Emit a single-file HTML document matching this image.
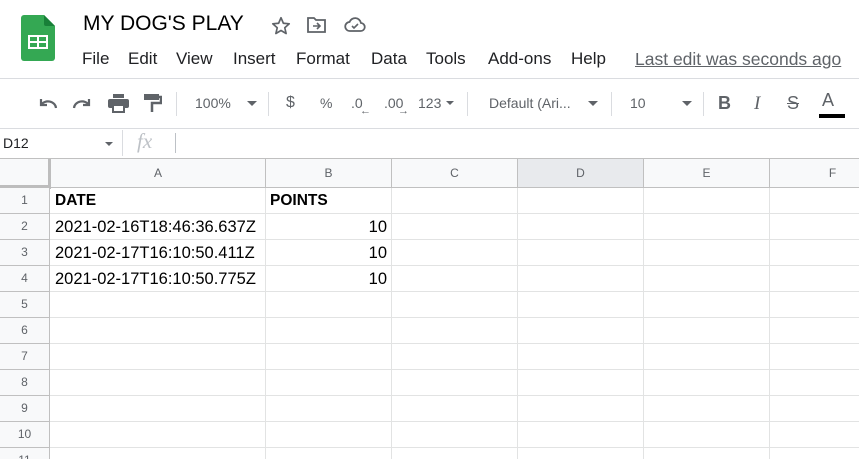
<!DOCTYPE html>
<html><head><meta charset="utf-8"><style>
*{margin:0;padding:0;box-sizing:border-box}
html,body{width:859px;height:459px;overflow:hidden}
body{background:#fff;font-family:"Liberation Sans",Arial,sans-serif;position:relative;color:#202124}
.a{position:absolute;white-space:nowrap}
.tb{color:#5f6368;font-size:14px}
.sep{position:absolute;width:1px;background:#dadce0;top:92px;height:24px}
.hl{position:absolute;left:0;width:859px;height:1px;background:#e2e3e3}
.vl{position:absolute;top:188px;height:271px;width:1px;background:#e2e3e3}
.ch{position:absolute;top:159px;height:29px;background:#f8f9fa;border-right:1px solid #c0c0c0;border-bottom:1px solid #c0c0c0;font-size:12px;color:#5f6368;text-align:center;line-height:29px}
.rh{position:absolute;left:0;width:50px;height:26px;background:#f8f9fa;border-right:1px solid #c0c0c0;border-bottom:1px solid #c0c0c0;font-size:12px;color:#5f6368;text-align:center;line-height:25px}
.c{position:absolute;font-size:16.5px;color:#000;line-height:26px}
.r{position:absolute;font-size:16.5px;color:#000;line-height:26px;right:472px}
</style></head><body>
<svg class="a" style="left:21px;top:15px" width="34" height="46" viewBox="0 0 34 46"><path d="M3 0h20l11 11v32a3 3 0 0 1-3 3H3a3 3 0 0 1-3-3V3a3 3 0 0 1 3-3z" fill="#34a853"/><path d="M23 0l11 11H25a2 2 0 0 1-2-2z" fill="#188038"/><rect x="7" y="20" width="20" height="14" fill="#fff"/><rect x="9" y="22" width="7" height="4" fill="#34a853"/><rect x="18" y="22" width="7" height="4" fill="#34a853"/><rect x="9" y="28" width="7" height="4" fill="#34a853"/><rect x="18" y="28" width="7" height="4" fill="#34a853"/></svg>
<div class="a" style="left:83px;top:12px;font-size:21px;color:#000">MY DOG'S PLAY</div>
<svg class="a" style="left:270px;top:15px" width="22" height="22" viewBox="0 0 24 24"><path d="M12 3l2.6 6 6.4.6-4.9 4.3 1.5 6.3L12 16.9 6.4 20.2l1.5-6.3L3 9.6 9.4 9z" fill="none" stroke="#5f6368" stroke-width="1.8" stroke-linejoin="round"/></svg>
<svg class="a" style="left:307px;top:16px" width="20" height="18" viewBox="0 0 20 18"><path d="M1 2h6l2 2h9v12H1z" fill="none" stroke="#5f6368" stroke-width="1.8"/><path d="M6 10h6M10 7l3 3-3 3" fill="none" stroke="#5f6368" stroke-width="1.6"/></svg>
<svg class="a" style="left:344px;top:17px" width="22" height="16" viewBox="0 0 22 16"><path d="M6 14a4.5 4.5 0 0 1-.5-9A6 6 0 0 1 17 6a4 4 0 0 1-.5 8z" fill="none" stroke="#5f6368" stroke-width="1.8"/><path d="M8 9l2 2 4-4" fill="none" stroke="#5f6368" stroke-width="1.6"/></svg>
<div class="a" style="left:82px;top:49px;font-size:17px;color:#202124">
<span class="a" style="left:0">File</span><span class="a" style="left:46px">Edit</span><span class="a" style="left:94px">View</span><span class="a" style="left:151px">Insert</span><span class="a" style="left:214px">Format</span><span class="a" style="left:289px">Data</span><span class="a" style="left:344px">Tools</span><span class="a" style="left:406px">Add-ons</span><span class="a" style="left:489px">Help</span></div>
<div class="a" style="left:635px;top:49px;font-size:17.5px;color:#5f6368;text-decoration:underline">Last edit was seconds ago</div>
<div class="hl" style="top:78px;background:#dadce0"></div>
<svg class="a" style="left:37px;top:96px" width="22" height="16" viewBox="0 0 22 16"><path d="M4 3v6h6" fill="none" stroke="#5f6368" stroke-width="2.2"/><path d="M4 9a8 7 0 0 1 15 3" fill="none" stroke="#5f6368" stroke-width="2.2"/></svg>
<svg class="a" style="left:71px;top:96px" width="22" height="16" viewBox="0 0 22 16"><path d="M18 3v6h-6" fill="none" stroke="#5f6368" stroke-width="2.2"/><path d="M18 9a8 7 0 0 0-15 3" fill="none" stroke="#5f6368" stroke-width="2.2"/></svg>
<svg class="a" style="left:108px;top:94px" width="21" height="19" viewBox="0 0 21 19"><rect x="5" y="0" width="11" height="4" fill="#5f6368"/><rect x="0" y="5" width="21" height="9" rx="2" fill="#5f6368"/><rect x="5" y="11" width="11" height="7" fill="#fff" stroke="#5f6368" stroke-width="2"/></svg>
<svg class="a" style="left:144px;top:94px" width="18" height="19" viewBox="0 0 18 19"><rect x="0" y="0" width="15" height="6" fill="#5f6368"/><path d="M15 3h2v6H8v9" fill="none" stroke="#5f6368" stroke-width="2.5"/></svg>
<div class="sep" style="left:176px"></div>
<div class="a tb" style="left:195px;top:95px">100%</div>
<div class="a" style="left:247px;top:101px;border:5px solid transparent;border-top-color:#5f6368"></div>
<div class="sep" style="left:268px"></div>
<div class="a tb" style="left:286px;top:94px;font-size:16px">$</div>
<div class="a tb" style="left:320px;top:95px">%</div>
<div class="a tb" style="left:351px;top:95px">.0</div>
<div class="a tb" style="left:360px;top:105px;font-size:11px">←</div>
<div class="a tb" style="left:384px;top:95px">.00</div>
<div class="a tb" style="left:398px;top:105px;font-size:11px">→</div>
<div class="a tb" style="left:418px;top:95px">123</div>
<div class="a" style="left:446px;top:101px;border:4px solid transparent;border-top-color:#5f6368"></div>
<div class="sep" style="left:467px"></div>
<div class="a tb" style="left:489px;top:95px">Default (Ari...</div>
<div class="a" style="left:588px;top:101px;border:5px solid transparent;border-top-color:#5f6368"></div>
<div class="sep" style="left:611px"></div>
<div class="a tb" style="left:630px;top:95px">10</div>
<div class="a" style="left:682px;top:101px;border:5px solid transparent;border-top-color:#5f6368"></div>
<div class="sep" style="left:703px"></div>
<div class="a" style="left:718px;top:93px;font-size:18px;font-weight:bold;color:#5f6368">B</div>
<div class="a" style="left:754px;top:93px;font-size:19px;font-style:italic;font-family:'Liberation Serif',serif;color:#5f6368">I</div>
<div class="a" style="left:787px;top:93px;font-size:18px;color:#5f6368;text-decoration:line-through">S</div>
<div class="a" style="left:822px;top:90px;font-size:18px;color:#5f6368">A</div>
<div class="a" style="left:819px;top:114px;width:26px;height:4px;background:#000"></div>
<div class="hl" style="top:128px;background:#dadce0"></div>
<div class="a" style="left:3px;top:135px;font-size:14px;color:#202124">D12</div>
<div class="a" style="left:105px;top:142px;border:4px solid transparent;border-top-color:#5f6368"></div>
<div class="a" style="left:122px;top:130px;width:1px;height:26px;background:#dadce0"></div>
<div class="a" style="left:137px;top:129px;font-size:21px;font-style:italic;font-family:'Liberation Serif',serif;color:#bdc1c6">fx</div>
<div class="a" style="left:175px;top:133px;width:1px;height:20px;background:#bdc1c6"></div>
<div class="hl" style="top:158px;background:#c0c0c0"></div>
<div class="ch" style="left:0;width:51px;border-right:3px solid #bdbdbd;border-bottom:4px solid #bdbdbd;height:30px"></div>
<div class="ch" style="left:51px;width:215px">A</div>
<div class="ch" style="left:266px;width:126px">B</div>
<div class="ch" style="left:392px;width:126px">C</div>
<div class="ch" style="left:518px;width:126px;background:#e8eaed">D</div>
<div class="ch" style="left:644px;width:126px">E</div>
<div class="ch" style="left:770px;width:126px">F</div>
<div class="hl" style="top:213px"></div><div class="hl" style="top:239px"></div><div class="hl" style="top:265px"></div><div class="hl" style="top:291px"></div><div class="hl" style="top:317px"></div><div class="hl" style="top:343px"></div><div class="hl" style="top:369px"></div><div class="hl" style="top:395px"></div><div class="hl" style="top:421px"></div><div class="hl" style="top:447px"></div>
<div class="vl" style="left:265px"></div><div class="vl" style="left:391px"></div><div class="vl" style="left:517px"></div><div class="vl" style="left:643px"></div><div class="vl" style="left:769px"></div>
<div class="rh" style="top:188px">1</div><div class="rh" style="top:214px">2</div><div class="rh" style="top:240px">3</div><div class="rh" style="top:266px">4</div><div class="rh" style="top:292px">5</div><div class="rh" style="top:318px">6</div><div class="rh" style="top:344px">7</div><div class="rh" style="top:370px">8</div><div class="rh" style="top:396px">9</div><div class="rh" style="top:422px">10</div><div class="rh" style="top:448px">11</div>
<div class="c" style="left:55px;top:188px;font-weight:bold;font-size:15.5px">DATE</div>
<div class="c" style="left:270px;top:188px;font-weight:bold;font-size:15.5px">POINTS</div>
<div class="c" style="left:55px;top:214px">2021-02-16T18:46:36.637Z</div>
<div class="c" style="left:55px;top:240px">2021-02-17T16:10:50.411Z</div>
<div class="c" style="left:55px;top:266px">2021-02-17T16:10:50.775Z</div>
<div class="r" style="top:214px">10</div>
<div class="r" style="top:240px">10</div>
<div class="r" style="top:266px">10</div>
</body></html>
